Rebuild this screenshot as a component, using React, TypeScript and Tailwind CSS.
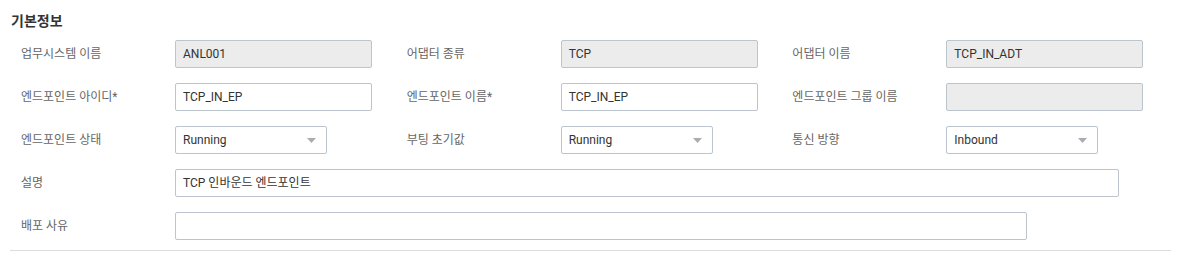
const font = "font-['Roboto','Noto_Sans_CJK_KR',sans-serif]";

type Field = {
  label: string;
  value?: string;
  kind: "readonly" | "text" | "select";
};

const rows: Field[][] = [
  [
    { label: "업무시스템 이름", value: "ANL001", kind: "readonly" },
    { label: "어댑터 종류", value: "TCP", kind: "readonly" },
    { label: "어댑터 이름", value: "TCP_IN_ADT", kind: "readonly" },
  ],
  [
    { label: "엔드포인트 아이디*", value: "TCP_IN_EP", kind: "text" },
    { label: "엔드포인트 이름*", value: "TCP_IN_EP", kind: "text" },
    { label: "엔드포인트 그룹 이름", value: "", kind: "readonly" },
  ],
  [
    { label: "엔드포인트 상태", value: "Running", kind: "select" },
    { label: "부팅 초기값", value: "Running", kind: "select" },
    { label: "통신 방향", value: "Inbound", kind: "select" },
  ],
];

const Control = ({ field }: { field: Field }) => {
  if (field.kind === "select") {
    return (
      <div className="flex h-[28px] w-[152px] items-center justify-between rounded-[2px] border border-[#bcc4cd] bg-white pl-[7px] pr-[10px] text-[12px] text-[#333]">
        <span>{field.value}</span>
        <svg width="9" height="5" viewBox="0 0 9 5">
          <path d="M0 0h9L4.5 5z" fill="#a9adb2" />
        </svg>
      </div>
    );
  }
  const bg = field.kind === "readonly" ? "bg-[#ececec]" : "bg-white";
  return (
    <div
      className={`flex h-[28px] w-[197px] items-center rounded-[2px] border border-[#bcc4cd] ${bg} pl-[7px] text-[12px] text-[#333]`}
    >
      {field.value}
    </div>
  );
};

export default function App() {
  return (
    <div className={`${font} h-[265px] w-[1188px] bg-white px-[10px] pt-[11px]`}>
      <h3 className="mb-[9px] h-[20px] pl-[1px] text-[14px] font-bold leading-[20px] text-[#333]">
        기본정보
      </h3>

      <div className="flex flex-col gap-[15px] pl-[11px]">
        {rows.map((row, i) => (
          <div key={i} className="flex">
            {row.map((f) => (
              <div key={f.label} className="flex w-[387px] items-center">
                <label className="w-[154px] text-[12px] text-[#666]">{f.label}</label>
                <Control field={f} />
              </div>
            ))}
          </div>
        ))}

        <div className="flex items-center">
          <label className="w-[154px] text-[12px] text-[#666]">설명</label>
          <div className="flex h-[28px] w-[944px] items-center rounded-[2px] border border-[#bcc4cd] bg-white pl-[7px] text-[12px] text-[#333]">
            TCP 인바운드 엔드포인트
          </div>
        </div>

        <div className="flex items-center">
          <label className="w-[154px] text-[12px] text-[#666]">배포 사유</label>
          <div className="h-[28px] w-[852px] rounded-[2px] border border-[#bcc4cd] bg-white" />
        </div>
      </div>

      <div className="mt-[10px] h-px w-[1161px] bg-[#dcdcdc]" />
    </div>
  );
}
